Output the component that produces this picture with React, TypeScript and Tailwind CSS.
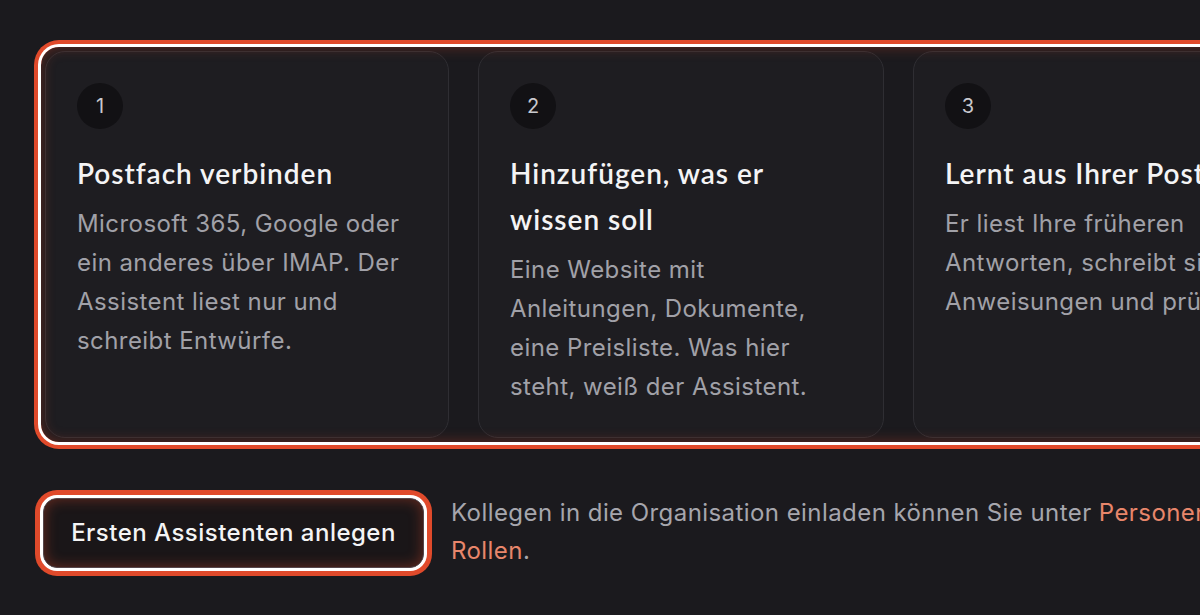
const steps = [
  {
    title: "Postfach verbinden",
    text: "Microsoft 365, Google oder ein anderes über IMAP. Der Assistent liest nur und schreibt Entwürfe.",
  },
  {
    title: "Hinzufügen, was er wissen soll",
    text: "Eine Website mit Anleitungen, Dokumente, eine Preisliste. Was hier steht, weiß der Assistent.",
  },
  {
    title: "Lernt aus Ihrer Post",
    text: "Er liest Ihre früheren Antworten, schreibt sich Anweisungen und prüft sie.",
  },
];

export default function App() {
  return (
    <div className="h-[615px] w-[1200px] overflow-hidden bg-[#1b1a1e] pl-[45px] pt-[51px] font-['Inter',sans-serif]">
      <div className="w-[1274px]">
        <div className="relative">
          <div className="grid grid-cols-[404px_406px_404px] gap-[29px]">
            {steps.map((step, index) => (
              <div
                key={step.title}
                className="rounded-[20px] border border-[#2f2e33] bg-[#1e1d21] p-[31px]"
              >
                <div className="flex h-[46px] w-[46px] items-center justify-center rounded-full bg-[#121114] text-[20px] text-[#c9c9ce]">
                  {index + 1}
                </div>
                <h3 className="mt-[21px] font-['Lato',sans-serif] text-[28px] font-semibold leading-[46px] tracking-[0.035em] text-[#f4f4f5]">
                  {step.title}
                </h3>
                <p className="mt-[8px] text-[24px] leading-[39px] tracking-[0.018em] text-[#a1a1a8]">
                  {step.text}
                </p>
              </div>
            ))}
          </div>
          <div className="pointer-events-none absolute -inset-[4px] rounded-[18px] shadow-[0_0_0_3px_#ffffff,0_0_0_7px_#e04a2b,inset_0_0_14px_rgba(224,74,43,0.35)]" />
        </div>

        <div className="mt-[58px] flex items-center gap-[27px]">
          <button className="-ml-[2px] h-[70px] w-[381px] shrink-0 rounded-[14px] border border-[#55464a] bg-[#1a1618] text-[24px] font-medium tracking-[0.02em] text-[#f4f4f5] shadow-[0_0_0_3px_#ffffff,0_0_0_8px_#e04a2b,inset_0_0_14px_rgba(224,74,43,0.4)]">
            Ersten Assistenten anlegen
          </button>
          <p className="-mt-[2px] w-[820px] text-[24px] leading-[38px] tracking-[0.018em] text-[#a6a6ad]">
            Kollegen in die Organisation einladen können Sie unter{" "}
            <a className="text-[#e8866b]">Personen &amp; Rollen</a>.
          </p>
        </div>
      </div>
    </div>
  );
}
